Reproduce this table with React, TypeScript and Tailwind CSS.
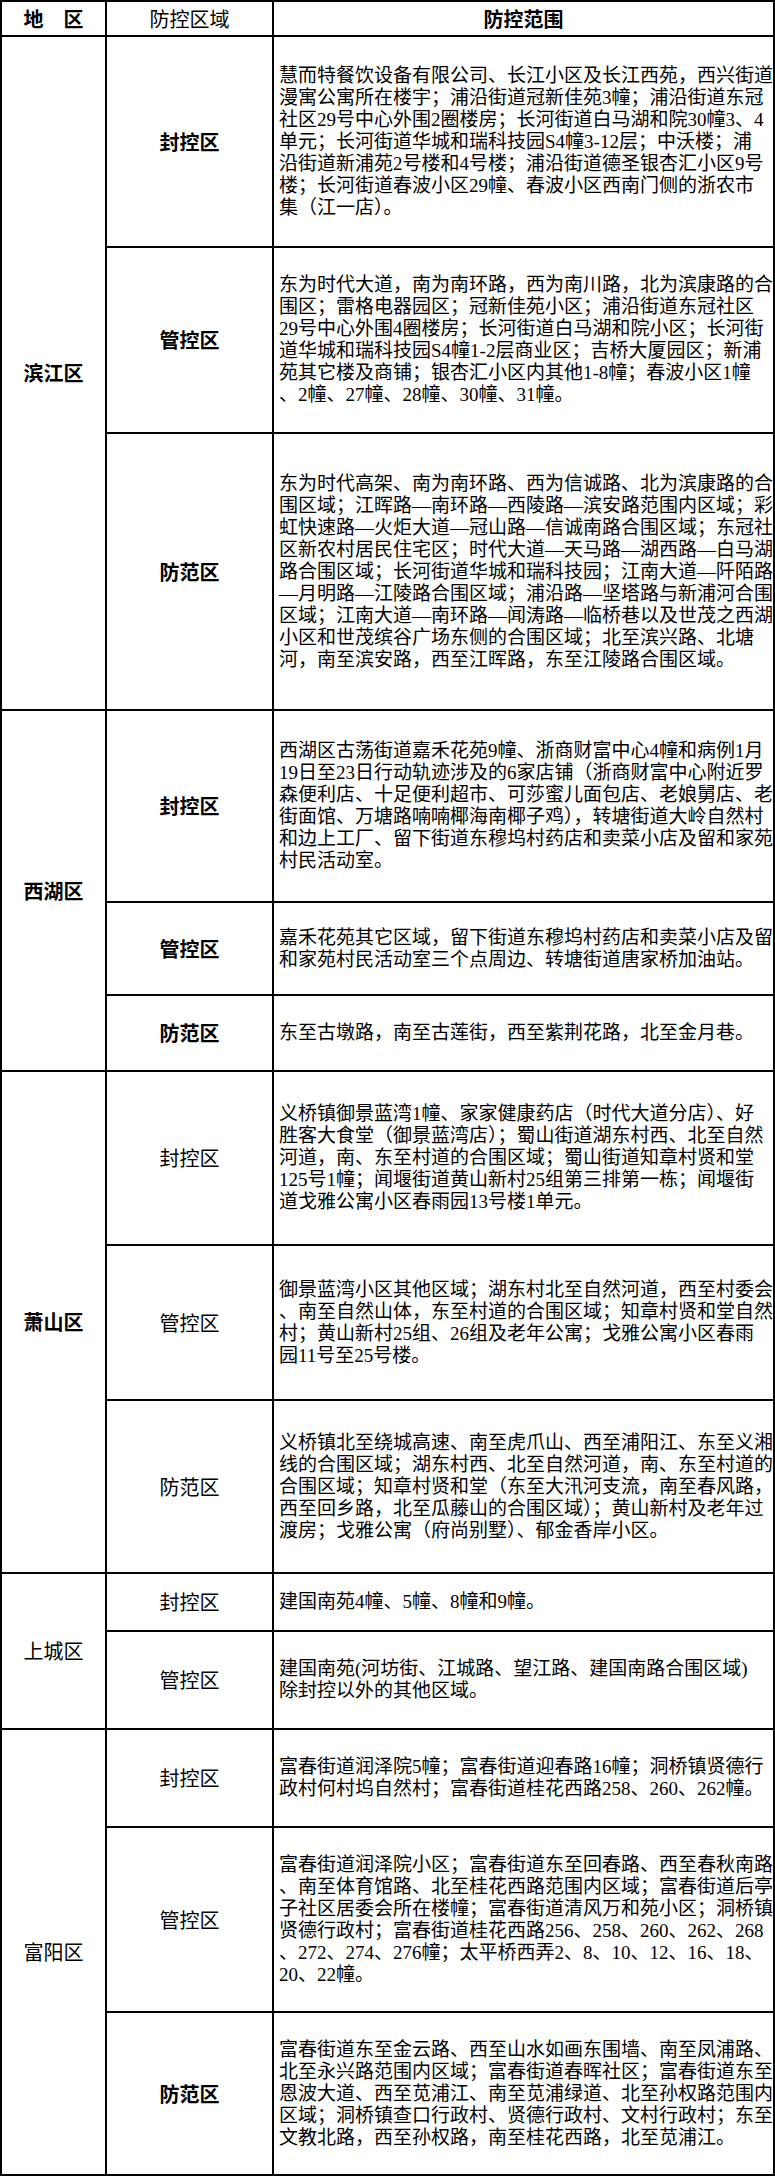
import React from "react";

type Zone = { label: string; bold: boolean; lines: string[] };
type District = { name: string; bold: boolean; zones: Zone[] };

const data: District[] = [
  {
    name: "滨江区",
    bold: true,
    zones: [
      {
        label: "封控区",
        bold: true,
        lines: [
          "慧而特餐饮设备有限公司、长江小区及长江西苑，西兴街道",
          "漫寓公寓所在楼宇；浦沿街道冠新佳苑3幢；浦沿街道东冠",
          "社区29号中心外围2圈楼房；长河街道白马湖和院30幢3、4",
          "单元；长河街道华城和瑞科技园S4幢3-12层；中沃楼；浦",
          "沿街道新浦苑2号楼和4号楼；浦沿街道德圣银杏汇小区9号",
          "楼；长河街道春波小区29幢、春波小区西南门侧的浙农市",
          "集（江一店）。",
        ],
      },
      {
        label: "管控区",
        bold: true,
        lines: [
          "东为时代大道，南为南环路，西为南川路，北为滨康路的合",
          "围区；雷格电器园区；冠新佳苑小区；浦沿街道东冠社区",
          "29号中心外围4圈楼房；长河街道白马湖和院小区；长河街",
          "道华城和瑞科技园S4幢1-2层商业区；吉桥大厦园区；新浦",
          "苑其它楼及商铺；银杏汇小区内其他1-8幢；春波小区1幢",
          "、2幢、27幢、28幢、30幢、31幢。",
        ],
      },
      {
        label: "防范区",
        bold: true,
        lines: [
          "东为时代高架、南为南环路、西为信诚路、北为滨康路的合",
          "围区域；江晖路—南环路—西陵路—滨安路范围内区域；彩",
          "虹快速路—火炬大道—冠山路—信诚南路合围区域；东冠社",
          "区新农村居民住宅区；时代大道—天马路—湖西路—白马湖",
          "路合围区域；长河街道华城和瑞科技园；江南大道—阡陌路",
          "—月明路—江陵路合围区域；浦沿路—坚塔路与新浦河合围",
          "区域；江南大道—南环路—闻涛路—临桥巷以及世茂之西湖",
          "小区和世茂缤谷广场东侧的合围区域；北至滨兴路、北塘",
          "河，南至滨安路，西至江晖路，东至江陵路合围区域。",
        ],
      },
    ],
  },
  {
    name: "西湖区",
    bold: true,
    zones: [
      {
        label: "封控区",
        bold: true,
        lines: [
          "西湖区古荡街道嘉禾花苑9幢、浙商财富中心4幢和病例1月",
          "19日至23日行动轨迹涉及的6家店铺（浙商财富中心附近罗",
          "森便利店、十足便利超市、可莎蜜儿面包店、老娘舅店、老",
          "街面馆、万塘路喃喃椰海南椰子鸡），转塘街道大岭自然村",
          "和边上工厂、留下街道东穆坞村药店和卖菜小店及留和家苑",
          "村民活动室。",
        ],
      },
      {
        label: "管控区",
        bold: true,
        lines: [
          "嘉禾花苑其它区域，留下街道东穆坞村药店和卖菜小店及留",
          "和家苑村民活动室三个点周边、转塘街道唐家桥加油站。",
        ],
      },
      {
        label: "防范区",
        bold: true,
        lines: ["东至古墩路，南至古莲街，西至紫荆花路，北至金月巷。"],
      },
    ],
  },
  {
    name: "萧山区",
    bold: true,
    zones: [
      {
        label: "封控区",
        bold: false,
        lines: [
          "义桥镇御景蓝湾1幢、家家健康药店（时代大道分店）、好",
          "胜客大食堂（御景蓝湾店）；蜀山街道湖东村西、北至自然",
          "河道，南、东至村道的合围区域；蜀山街道知章村贤和堂",
          "125号1幢；闻堰街道黄山新村25组第三排第一栋；闻堰街",
          "道戈雅公寓小区春雨园13号楼1单元。",
        ],
      },
      {
        label: "管控区",
        bold: false,
        lines: [
          "御景蓝湾小区其他区域；湖东村北至自然河道，西至村委会",
          "、南至自然山体，东至村道的合围区域；知章村贤和堂自然",
          "村；黄山新村25组、26组及老年公寓；戈雅公寓小区春雨",
          "园11号至25号楼。",
        ],
      },
      {
        label: "防范区",
        bold: false,
        lines: [
          "义桥镇北至绕城高速、南至虎爪山、西至浦阳江、东至义湘",
          "线的合围区域；湖东村西、北至自然河道，南、东至村道的",
          "合围区域；知章村贤和堂（东至大汛河支流，南至春风路，",
          "西至回乡路，北至瓜藤山的合围区域）；黄山新村及老年过",
          "渡房；戈雅公寓（府尚别墅）、郁金香岸小区。",
        ],
      },
    ],
  },
  {
    name: "上城区",
    bold: false,
    zones: [
      {
        label: "封控区",
        bold: false,
        lines: ["建国南苑4幢、5幢、8幢和9幢。"],
      },
      {
        label: "管控区",
        bold: false,
        lines: [
          "建国南苑(河坊街、江城路、望江路、建国南路合围区域)",
          "除封控以外的其他区域。",
        ],
      },
    ],
  },
  {
    name: "富阳区",
    bold: false,
    zones: [
      {
        label: "封控区",
        bold: false,
        lines: [
          "富春街道润泽院5幢；富春街道迎春路16幢；洞桥镇贤德行",
          "政村何村坞自然村；富春街道桂花西路258、260、262幢。",
        ],
      },
      {
        label: "管控区",
        bold: false,
        lines: [
          "富春街道润泽院小区；富春街道东至回春路、西至春秋南路",
          "、南至体育馆路、北至桂花西路范围内区域；富春街道后亭",
          "子社区居委会所在楼幢；富春街道清风万和苑小区；洞桥镇",
          "贤德行政村；富春街道桂花西路256、258、260、262、268",
          "、272、274、276幢；太平桥西弄2、8、10、12、16、18、",
          "20、22幢。",
        ],
      },
      {
        label: "防范区",
        bold: true,
        lines: [
          "富春街道东至金云路、西至山水如画东围墙、南至凤浦路、",
          "北至永兴路范围内区域；富春街道春晖社区；富春街道东至",
          "恩波大道、西至苋浦江、南至苋浦绿道、北至孙权路范围内",
          "区域；洞桥镇查口行政村、贤德行政村、文村行政村；东至",
          "文教北路，西至孙权路，南至桂花西路，北至苋浦江。",
        ],
      },
    ],
  },
];

const labelFont = "font-['Noto_Sans_CJK_SC',sans-serif]";
const bodyFont = "font-['Liberation_Serif','Noto_Sans_CJK_SC',serif]";

function DistrictCell({ d }: { d: District }) {
  const span = d.zones.length === 3 ? "row-span-3" : "row-span-2";
  return (
    <div
      className={`${span} bg-white flex items-center justify-center text-[20px] text-black ${labelFont} ${
        d.bold ? "font-bold" : "font-normal"
      }`}
    >
      {d.name}
    </div>
  );
}

export default function App() {
  return (
    <div className="w-[775px] bg-white">
      <div className="grid w-[775px] grid-cols-[103px_165px_499px] grid-rows-[33px_209px_184px_275px_190px_91px_74px_172px_153px_171px_56px_96px_96px_183px_161px] gap-[2px] bg-black p-[2px]">
        <div className={`bg-white flex items-center justify-center text-[20px] font-bold text-black ${labelFont}`}>
          地　区
        </div>
        <div className={`bg-white flex items-center justify-center text-[20px] font-normal text-black ${labelFont}`}>
          防控区域
        </div>
        <div className={`bg-white flex items-center justify-center text-[20px] font-bold text-black ${labelFont}`}>
          防控范围
        </div>
        {data.map((d) => (
          <React.Fragment key={d.name}>
            <DistrictCell d={d} />
            {d.zones.map((z, i) => (
              <React.Fragment key={i}>
                <div
                  className={`bg-white flex items-center justify-center text-[20px] text-black ${labelFont} ${
                    z.bold ? "font-bold" : "font-normal"
                  }`}
                >
                  {z.label}
                </div>
                <div className={`bg-white flex items-center pl-[5px] overflow-hidden text-[19px] leading-[22px] text-black ${bodyFont}`}>
                  <div>
                    {z.lines.map((l, j) => (
                      <div key={j} className="whitespace-nowrap">
                        {l}
                      </div>
                    ))}
                  </div>
                </div>
              </React.Fragment>
            ))}
          </React.Fragment>
        ))}
      </div>
    </div>
  );
}
